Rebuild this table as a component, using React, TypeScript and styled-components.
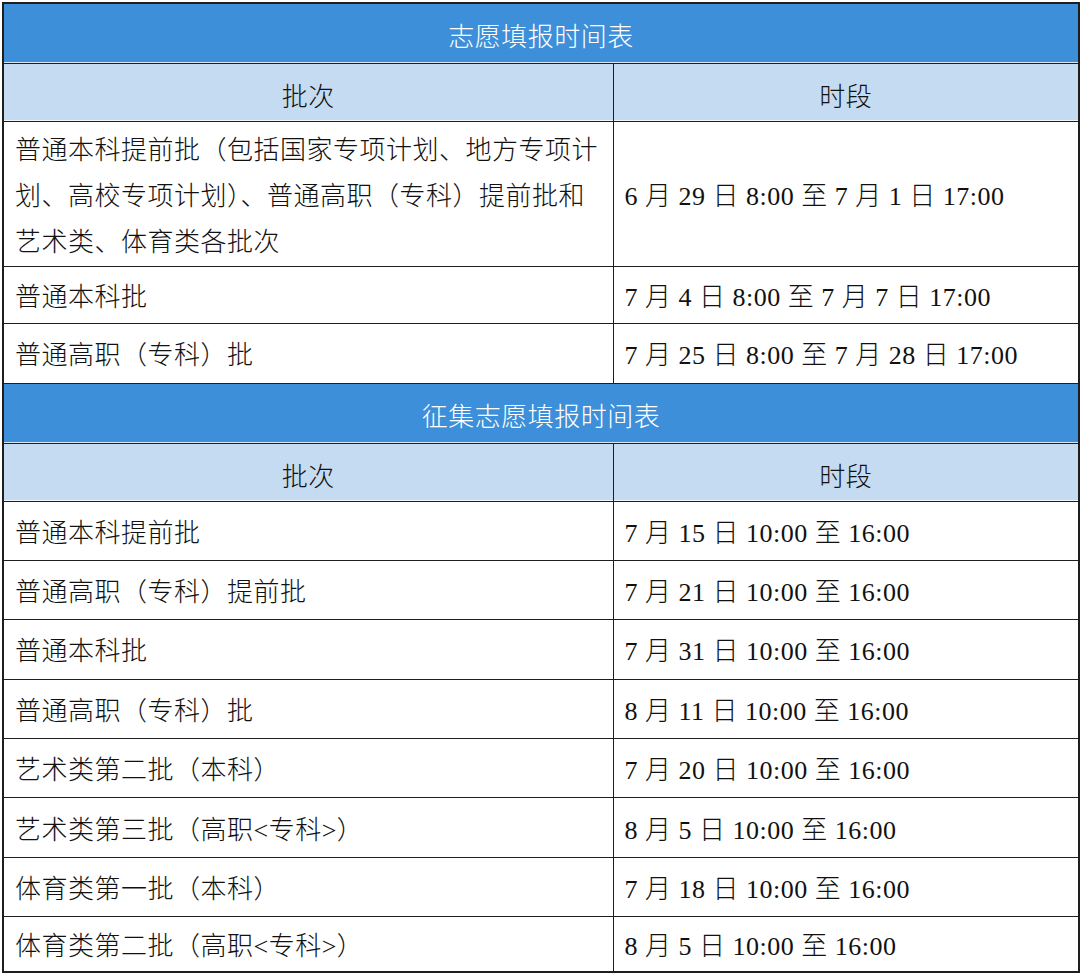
import React from "react";
import styled, { createGlobalStyle } from "styled-components";

const Global = createGlobalStyle`
  html, body {
    margin: 0;
    background: #ffffff;
  }
  body {
    font-family: "Liberation Serif", "Noto Sans CJK SC", serif;
    color: #111111;
  }
`;

const Page = styled.div`
  padding: 2px 2px 0 2px;
  width: 1076px;
`;

const Table = styled.table`
  width: 1076px;
  border-collapse: collapse;
  table-layout: fixed;
  font-size: 26px;
  font-weight: 300;
  letter-spacing: 0.5px;
  border: 2px solid #1e1e1e;
`;

const TitleCell = styled.td`
  height: 57px;
  padding: 2px 0 0;
  background: #3d8fd9;
  color: #ffffff;
  text-align: center;
  vertical-align: middle;
  border: 1px solid #1e1e1e;
  box-shadow: inset 0 -1px 0 #d8e6f5;
`;

const HeadCell = styled.td`
  height: 53px;
  padding: 4px 0 0;
  background: #c5dbf1;
  text-align: center;
  vertical-align: middle;
  border: 1px solid #1e1e1e;
  box-shadow: inset 0 -1px 0 #f2f6fb;
`;

const Cell = styled.td<{ $h?: number; $right?: boolean }>`
  height: ${(p) => p.$h ?? 52.4}px;
  padding: 6px 6px 0 ${(p) => (p.$right ? 11 : 11)}px;
  vertical-align: middle;
  border: 1px solid #1e1e1e;
  line-height: 46px;
  white-space: nowrap;
`;

type Row = { batch: React.ReactNode; time: string; h?: number };

const mainRows: Row[] = [
  {
    batch: (
      <>
        普通本科提前批（包括国家专项计划、地方专项计
        <br />
        划、高校专项计划）、普通高职（专科）提前批和
        <br />
        艺术类、体育类各批次
      </>
    ),
    time: "6 月 29 日 8:00 至 7 月 1 日 17:00",
    h: 137,
  },
  { batch: "普通本科批", time: "7 月 4 日 8:00 至 7 月 7 日 17:00", h: 49.5 },
  { batch: "普通高职（专科）批", time: "7 月 25 日 8:00 至 7 月 28 日 17:00", h: 53 },
];

const extraRows: Row[] = [
  { batch: "普通本科提前批", time: "7 月 15 日 10:00 至 16:00" },
  { batch: "普通高职（专科）提前批", time: "7 月 21 日 10:00 至 16:00" },
  { batch: "普通本科批", time: "7 月 31 日 10:00 至 16:00" },
  { batch: "普通高职（专科）批", time: "8 月 11 日 10:00 至 16:00" },
  { batch: "艺术类第二批（本科）", time: "7 月 20 日 10:00 至 16:00" },
  { batch: "艺术类第三批（高职<专科>）", time: "8 月 5 日 10:00 至 16:00" },
  { batch: "体育类第一批（本科）", time: "7 月 18 日 10:00 至 16:00" },
  { batch: "体育类第二批（高职<专科>）", time: "8 月 5 日 10:00 至 16:00", h: 48 },
];

const Section = ({ title, rows }: { title: string; rows: Row[] }) => (
  <>
    <tr>
      <TitleCell colSpan={2}>{title}</TitleCell>
    </tr>
    <tr>
      <HeadCell>批次</HeadCell>
      <HeadCell>时段</HeadCell>
    </tr>
    {rows.map((r, i) => (
      <tr key={i}>
        <Cell $h={r.h}>{r.batch}</Cell>
        <Cell $h={r.h} $right>
          {r.time}
        </Cell>
      </tr>
    ))}
  </>
);

export default function App() {
  return (
    <Page>
      <Global />
      <Table>
        <colgroup>
          <col style={{ width: 610 }} />
          <col style={{ width: 466 }} />
        </colgroup>
        <tbody>
          <Section title="志愿填报时间表" rows={mainRows} />
          <Section title="征集志愿填报时间表" rows={extraRows} />
        </tbody>
      </Table>
    </Page>
  );
}
